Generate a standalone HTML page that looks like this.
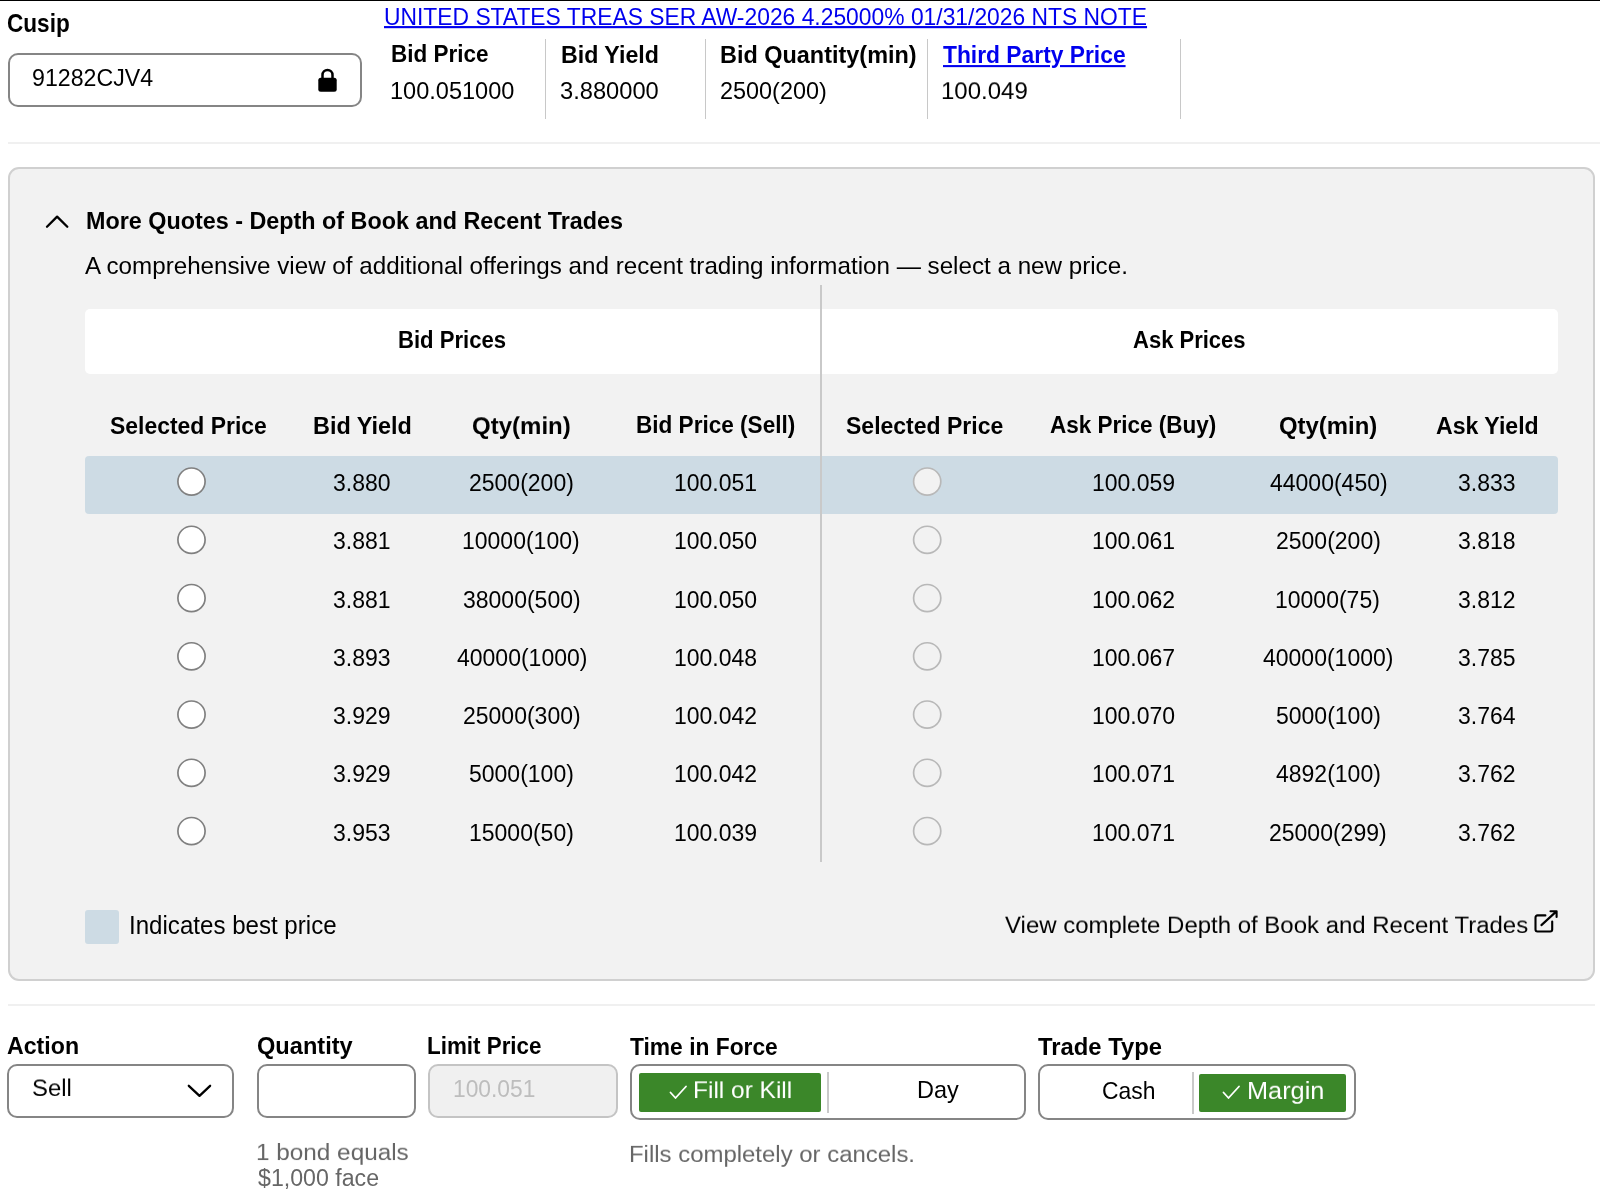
<!DOCTYPE html>
<html><head><meta charset="utf-8"><style>
html,body{margin:0;padding:0;background:#fff;width:1600px;height:1189px;overflow:hidden;position:relative;font-family:"Liberation Sans",sans-serif;}
.t{position:absolute;white-space:nowrap;will-change:transform;}
.b{position:absolute;box-sizing:border-box;}
</style></head><body>
<div class="b" style="left:0;top:0;width:1600px;height:1px;background:#000"></div>
<!-- cusip input -->
<div class="b" style="left:8px;top:53px;width:354px;height:54px;border:2px solid #858585;border-radius:10px;background:#fff"></div>
<svg class="b" style="left:318px;top:68px" width="19" height="24" viewBox="0 0 19 24">
  <path d="M4.5 10.5 V7 a5 5 0 0 1 10 0 V10.5" fill="none" stroke="#000" stroke-width="2.5"/>
  <rect x="0.3" y="9.8" width="18.4" height="14" rx="2.5" fill="#000"/>
</svg>
<!-- quote separators -->
<div class="b" style="left:545px;top:39px;width:1px;height:80px;background:#c8c8c8"></div>
<div class="b" style="left:705px;top:39px;width:1px;height:80px;background:#c8c8c8"></div>
<div class="b" style="left:927px;top:39px;width:1px;height:80px;background:#c8c8c8"></div>
<div class="b" style="left:1180px;top:39px;width:1px;height:80px;background:#c8c8c8"></div>
<!-- hr -->
<div class="b" style="left:8px;top:142px;width:1592px;height:2px;background:#f0f0f0"></div>
<!-- panel -->
<div class="b" style="left:8px;top:167px;width:1587px;height:814px;background:#f2f2f2;border:2px solid #d0d0d0;border-radius:11px"></div>
<svg class="b" style="left:44px;top:213px" width="27" height="18" viewBox="0 0 27 18">
  <path d="M3.0 13.8 L13.1 3.6 L23.3 13.8" fill="none" stroke="#000" stroke-width="2.3" stroke-linecap="round" stroke-linejoin="round"/>
</svg>
<div class="b" style="left:85px;top:308.6px;width:1473px;height:65.6px;background:#fff;border-radius:5px"></div>
<div class="b" style="left:85px;top:456px;width:1473px;height:57.5px;background:#cddbe4;border-radius:4px"></div>
<div class="b" style="left:820.3px;top:285px;width:1.5px;height:577px;background:#c9c9c9"></div>
<svg class="b" style="left:0;top:0" width="1600" height="1189" viewBox="0 0 1600 1189">
<circle cx="191.5" cy="481.60" r="13.6" fill="#fff" stroke="#808080" stroke-width="1.7"/>
<circle cx="927.2" cy="481.60" r="13.6" fill="#f2f2f2" stroke="#b8b8b8" stroke-width="1.7"/>
<circle cx="191.5" cy="539.85" r="13.6" fill="#fff" stroke="#808080" stroke-width="1.7"/>
<circle cx="927.2" cy="539.85" r="13.6" fill="#f2f2f2" stroke="#b8b8b8" stroke-width="1.7"/>
<circle cx="191.5" cy="598.10" r="13.6" fill="#fff" stroke="#808080" stroke-width="1.7"/>
<circle cx="927.2" cy="598.10" r="13.6" fill="#f2f2f2" stroke="#b8b8b8" stroke-width="1.7"/>
<circle cx="191.5" cy="656.35" r="13.6" fill="#fff" stroke="#808080" stroke-width="1.7"/>
<circle cx="927.2" cy="656.35" r="13.6" fill="#f2f2f2" stroke="#b8b8b8" stroke-width="1.7"/>
<circle cx="191.5" cy="714.60" r="13.6" fill="#fff" stroke="#808080" stroke-width="1.7"/>
<circle cx="927.2" cy="714.60" r="13.6" fill="#f2f2f2" stroke="#b8b8b8" stroke-width="1.7"/>
<circle cx="191.5" cy="772.85" r="13.6" fill="#fff" stroke="#808080" stroke-width="1.7"/>
<circle cx="927.2" cy="772.85" r="13.6" fill="#f2f2f2" stroke="#b8b8b8" stroke-width="1.7"/>
<circle cx="191.5" cy="831.10" r="13.6" fill="#fff" stroke="#808080" stroke-width="1.7"/>
<circle cx="927.2" cy="831.10" r="13.6" fill="#f2f2f2" stroke="#b8b8b8" stroke-width="1.7"/>
</svg>
<div class="b" style="left:85px;top:910px;width:34px;height:33.5px;background:#cddbe4;border-radius:3px"></div>
<svg class="b" style="left:1533px;top:908px" width="27" height="27" viewBox="0 0 27 27">
  <path d="M12.4 7.4 H4.5 a2 2 0 0 0 -2 2 V21.5 a2 2 0 0 0 2 2 H17.2 a2 2 0 0 0 2 -2 V13.5" fill="none" stroke="#000" stroke-width="2.1" stroke-linecap="round"/>
  <path d="M8.4 17.1 L23.4 3.4 M17.5 3.2 H23.6 V8.9" fill="none" stroke="#000" stroke-width="2.1" stroke-linecap="round" stroke-linejoin="round"/>
</svg>
<!-- hr2 -->
<div class="b" style="left:8px;top:1004px;width:1587px;height:2px;background:#f0f0f0"></div>
<!-- bottom controls -->
<div class="b" style="left:7px;top:1064px;width:227px;height:54px;border:2px solid #858585;border-radius:10px;background:#fff"></div>
<svg class="b" style="left:186px;top:1082px" width="28" height="18" viewBox="0 0 28 18">
  <path d="M2.8 3.8 L13.5 13.8 L24.1 3.8" fill="none" stroke="#000" stroke-width="2.3" stroke-linecap="round" stroke-linejoin="round"/>
</svg>
<div class="b" style="left:257px;top:1064px;width:159px;height:54px;border:2px solid #858585;border-radius:10px;background:#fff"></div>
<div class="b" style="left:428px;top:1064px;width:190px;height:54px;border:2px solid #c4c4c4;border-radius:10px;background:#f0f0f0"></div>
<div class="b" style="left:630px;top:1064px;width:396px;height:56px;border:2px solid #858585;border-radius:10px;background:#fff"></div>
<div class="b" style="left:639.2px;top:1073.2px;width:182.1px;height:38.8px;background:#3b8729;border-radius:2px"></div>
<div class="b" style="left:827.2px;top:1072px;width:1.5px;height:41px;background:#c9c9c9"></div>
<svg class="b" style="left:668px;top:1083px" width="22" height="18" viewBox="0 0 22 18">
  <path d="M2.5 9.5 L7.5 15 L18 3.5" fill="none" stroke="#fff" stroke-width="1.8" stroke-linecap="round" stroke-linejoin="round"/>
</svg>
<div class="b" style="left:1038px;top:1064px;width:318px;height:56px;border:2px solid #858585;border-radius:10px;background:#fff"></div>
<div class="b" style="left:1192px;top:1072px;width:1.5px;height:41.5px;background:#c9c9c9"></div>
<div class="b" style="left:1199.4px;top:1073.5px;width:146.8px;height:38.5px;background:#3b8729;border-radius:2px"></div>
<svg class="b" style="left:1221px;top:1083px" width="22" height="18" viewBox="0 0 22 18">
  <path d="M2.5 9.5 L7.5 15 L18 3.5" fill="none" stroke="#fff" stroke-width="1.8" stroke-linecap="round" stroke-linejoin="round"/>
</svg>

<div class="t" style="left:7.20px;top:14.09px;font-size:22.58px;line-height:22.58px;font-weight:bold;color:#000;transform:scaleY(1.126);transform-origin:0 19.11px;">Cusip</div>
<div class="t" style="left:384.00px;top:5.86px;font-size:22.85px;line-height:22.85px;font-weight:normal;color:#0000ee;transform:scaleY(1.075);transform-origin:0 19.34px;text-decoration:underline;text-underline-offset:1.4px;text-decoration-thickness:2px;">UNITED STATES TREAS SER AW-2026 4.25000% 01/31/2026 NTS NOTE</div>
<div class="t" style="left:32.07px;top:66.88px;font-size:23.18px;line-height:23.18px;font-weight:normal;color:#000;transform:scaleY(1.060);transform-origin:0 19.62px;">91282CJV4</div>
<div class="t" style="left:390.55px;top:44.45px;font-size:22.50px;line-height:22.50px;font-weight:bold;color:#000;transform:scaleY(1.066);transform-origin:0 19.05px;">Bid Price</div>
<div class="t" style="left:560.51px;top:43.86px;font-size:23.20px;line-height:23.20px;font-weight:bold;color:#000;transform:scaleY(1.034);transform-origin:0 19.64px;">Bid Yield</div>
<div class="t" style="left:719.79px;top:43.66px;font-size:23.44px;line-height:23.44px;font-weight:bold;color:#000;transform:scaleY(1.023);transform-origin:0 19.84px;">Bid Quantity(min)</div>
<div class="t" style="left:942.57px;top:44.18px;font-size:22.82px;line-height:22.82px;font-weight:bold;color:#0000ee;transform:scaleY(1.038);transform-origin:0 19.32px;text-decoration:underline;text-underline-offset:1.5px;text-decoration-thickness:1.6px;">Third Party Price</div>
<div class="t" style="left:390.25px;top:79.83px;font-size:23.54px;line-height:23.54px;font-weight:normal;color:#000;">100.051000</div>
<div class="t" style="left:560.29px;top:79.70px;font-size:23.68px;line-height:23.68px;font-weight:normal;color:#000;">3.880000</div>
<div class="t" style="left:720.03px;top:79.92px;font-size:23.43px;line-height:23.43px;font-weight:normal;color:#000;">2500(200)</div>
<div class="t" style="left:941.02px;top:79.43px;font-size:24.01px;line-height:24.01px;font-weight:normal;color:#000;transform:scaleY(0.984);transform-origin:0 20.32px;">100.049</div>
<div class="t" style="left:85.80px;top:209.74px;font-size:23.35px;line-height:23.35px;font-weight:bold;color:#000;transform:scaleY(1.058);transform-origin:0 19.76px;">More Quotes - Depth of Book and Recent Trades</div>
<div class="t" style="left:85.30px;top:254.31px;font-size:24.20px;line-height:24.20px;font-weight:normal;color:#000;">A comprehensive view of additional offerings and recent trading information — select a new price.</div>
<div class="t" style="left:398.27px;top:330.29px;font-size:22.11px;line-height:22.11px;font-weight:bold;color:#000;transform:scaleY(1.091);transform-origin:0 18.71px;">Bid Prices</div>
<div class="t" style="left:1133.16px;top:330.36px;font-size:22.02px;line-height:22.02px;font-weight:bold;color:#000;transform:scaleY(1.096);transform-origin:0 18.64px;">Ask Prices</div>
<div class="t" style="left:110.04px;top:414.98px;font-size:22.94px;line-height:22.94px;font-weight:bold;color:#000;transform:scaleY(1.033);transform-origin:0 19.42px;">Selected Price</div>
<div class="t" style="left:312.59px;top:414.57px;font-size:23.42px;line-height:23.42px;font-weight:bold;color:#000;transform:scaleY(1.012);transform-origin:0 19.83px;">Bid Yield</div>
<div class="t" style="left:472.29px;top:414.07px;font-size:24.02px;line-height:24.02px;font-weight:bold;color:#000;transform:scaleY(0.986);transform-origin:0 20.33px;">Qty(min)</div>
<div class="t" style="left:636.15px;top:415.29px;font-size:22.57px;line-height:22.57px;font-weight:bold;color:#000;transform:scaleY(1.049);transform-origin:0 19.11px;">Bid Price (Sell)</div>
<div class="t" style="left:845.79px;top:414.92px;font-size:23.01px;line-height:23.01px;font-weight:bold;color:#000;transform:scaleY(1.030);transform-origin:0 19.48px;">Selected Price</div>
<div class="t" style="left:1050.05px;top:415.34px;font-size:22.51px;line-height:22.51px;font-weight:bold;color:#000;transform:scaleY(1.052);transform-origin:0 19.06px;">Ask Price (Buy)</div>
<div class="t" style="left:1279.04px;top:414.17px;font-size:23.90px;line-height:23.90px;font-weight:bold;color:#000;">Qty(min)</div>
<div class="t" style="left:1435.79px;top:414.85px;font-size:23.10px;line-height:23.10px;font-weight:bold;color:#000;transform:scaleY(1.026);transform-origin:0 19.55px;">Ask Yield</div>
<div class="t" style="left:333.29px;top:472.03px;font-size:23.00px;line-height:23.00px;font-weight:normal;color:#000;transform:scaleY(1.059);transform-origin:0 19.47px;">3.880</div>
<div class="t" style="left:469.11px;top:472.03px;font-size:23.00px;line-height:23.00px;font-weight:normal;color:#000;transform:scaleY(1.059);transform-origin:0 19.47px;">2500(200)</div>
<div class="t" style="left:673.66px;top:472.03px;font-size:23.00px;line-height:23.00px;font-weight:normal;color:#000;transform:scaleY(1.059);transform-origin:0 19.47px;">100.051</div>
<div class="t" style="left:1091.66px;top:472.03px;font-size:23.00px;line-height:23.00px;font-weight:normal;color:#000;transform:scaleY(1.059);transform-origin:0 19.47px;">100.059</div>
<div class="t" style="left:1269.55px;top:472.03px;font-size:23.00px;line-height:23.00px;font-weight:normal;color:#000;transform:scaleY(1.059);transform-origin:0 19.47px;">44000(450)</div>
<div class="t" style="left:1458.29px;top:472.03px;font-size:23.00px;line-height:23.00px;font-weight:normal;color:#000;transform:scaleY(1.059);transform-origin:0 19.47px;">3.833</div>
<div class="t" style="left:333.41px;top:530.28px;font-size:23.00px;line-height:23.00px;font-weight:normal;color:#000;transform:scaleY(1.059);transform-origin:0 19.47px;">3.881</div>
<div class="t" style="left:462.48px;top:530.28px;font-size:23.00px;line-height:23.00px;font-weight:normal;color:#000;transform:scaleY(1.059);transform-origin:0 19.47px;">10000(100)</div>
<div class="t" style="left:673.54px;top:530.28px;font-size:23.00px;line-height:23.00px;font-weight:normal;color:#000;transform:scaleY(1.059);transform-origin:0 19.47px;">100.050</div>
<div class="t" style="left:1091.66px;top:530.28px;font-size:23.00px;line-height:23.00px;font-weight:normal;color:#000;transform:scaleY(1.059);transform-origin:0 19.47px;">100.061</div>
<div class="t" style="left:1275.61px;top:530.28px;font-size:23.00px;line-height:23.00px;font-weight:normal;color:#000;transform:scaleY(1.059);transform-origin:0 19.47px;">2500(200)</div>
<div class="t" style="left:1458.29px;top:530.28px;font-size:23.00px;line-height:23.00px;font-weight:normal;color:#000;transform:scaleY(1.059);transform-origin:0 19.47px;">3.818</div>
<div class="t" style="left:333.41px;top:588.53px;font-size:23.00px;line-height:23.00px;font-weight:normal;color:#000;transform:scaleY(1.059);transform-origin:0 19.47px;">3.881</div>
<div class="t" style="left:462.94px;top:588.53px;font-size:23.00px;line-height:23.00px;font-weight:normal;color:#000;transform:scaleY(1.059);transform-origin:0 19.47px;">38000(500)</div>
<div class="t" style="left:673.54px;top:588.53px;font-size:23.00px;line-height:23.00px;font-weight:normal;color:#000;transform:scaleY(1.059);transform-origin:0 19.47px;">100.050</div>
<div class="t" style="left:1091.66px;top:588.53px;font-size:23.00px;line-height:23.00px;font-weight:normal;color:#000;transform:scaleY(1.059);transform-origin:0 19.47px;">100.062</div>
<div class="t" style="left:1275.38px;top:588.53px;font-size:23.00px;line-height:23.00px;font-weight:normal;color:#000;transform:scaleY(1.059);transform-origin:0 19.47px;">10000(75)</div>
<div class="t" style="left:1458.41px;top:588.53px;font-size:23.00px;line-height:23.00px;font-weight:normal;color:#000;transform:scaleY(1.059);transform-origin:0 19.47px;">3.812</div>
<div class="t" style="left:333.29px;top:646.78px;font-size:23.00px;line-height:23.00px;font-weight:normal;color:#000;transform:scaleY(1.059);transform-origin:0 19.47px;">3.893</div>
<div class="t" style="left:456.66px;top:646.78px;font-size:23.00px;line-height:23.00px;font-weight:normal;color:#000;transform:scaleY(1.059);transform-origin:0 19.47px;">40000(1000)</div>
<div class="t" style="left:673.54px;top:646.78px;font-size:23.00px;line-height:23.00px;font-weight:normal;color:#000;transform:scaleY(1.059);transform-origin:0 19.47px;">100.048</div>
<div class="t" style="left:1091.66px;top:646.78px;font-size:23.00px;line-height:23.00px;font-weight:normal;color:#000;transform:scaleY(1.059);transform-origin:0 19.47px;">100.067</div>
<div class="t" style="left:1263.16px;top:646.78px;font-size:23.00px;line-height:23.00px;font-weight:normal;color:#000;transform:scaleY(1.059);transform-origin:0 19.47px;">40000(1000)</div>
<div class="t" style="left:1458.29px;top:646.78px;font-size:23.00px;line-height:23.00px;font-weight:normal;color:#000;transform:scaleY(1.059);transform-origin:0 19.47px;">3.785</div>
<div class="t" style="left:333.41px;top:705.03px;font-size:23.00px;line-height:23.00px;font-weight:normal;color:#000;transform:scaleY(1.059);transform-origin:0 19.47px;">3.929</div>
<div class="t" style="left:462.71px;top:705.03px;font-size:23.00px;line-height:23.00px;font-weight:normal;color:#000;transform:scaleY(1.059);transform-origin:0 19.47px;">25000(300)</div>
<div class="t" style="left:673.66px;top:705.03px;font-size:23.00px;line-height:23.00px;font-weight:normal;color:#000;transform:scaleY(1.059);transform-origin:0 19.47px;">100.042</div>
<div class="t" style="left:1091.54px;top:705.03px;font-size:23.00px;line-height:23.00px;font-weight:normal;color:#000;transform:scaleY(1.059);transform-origin:0 19.47px;">100.070</div>
<div class="t" style="left:1275.72px;top:705.03px;font-size:23.00px;line-height:23.00px;font-weight:normal;color:#000;transform:scaleY(1.059);transform-origin:0 19.47px;">5000(100)</div>
<div class="t" style="left:1458.18px;top:705.03px;font-size:23.00px;line-height:23.00px;font-weight:normal;color:#000;transform:scaleY(1.059);transform-origin:0 19.47px;">3.764</div>
<div class="t" style="left:333.41px;top:763.28px;font-size:23.00px;line-height:23.00px;font-weight:normal;color:#000;transform:scaleY(1.059);transform-origin:0 19.47px;">3.929</div>
<div class="t" style="left:469.22px;top:763.28px;font-size:23.00px;line-height:23.00px;font-weight:normal;color:#000;transform:scaleY(1.059);transform-origin:0 19.47px;">5000(100)</div>
<div class="t" style="left:673.66px;top:763.28px;font-size:23.00px;line-height:23.00px;font-weight:normal;color:#000;transform:scaleY(1.059);transform-origin:0 19.47px;">100.042</div>
<div class="t" style="left:1091.66px;top:763.28px;font-size:23.00px;line-height:23.00px;font-weight:normal;color:#000;transform:scaleY(1.059);transform-origin:0 19.47px;">100.071</div>
<div class="t" style="left:1275.95px;top:763.28px;font-size:23.00px;line-height:23.00px;font-weight:normal;color:#000;transform:scaleY(1.059);transform-origin:0 19.47px;">4892(100)</div>
<div class="t" style="left:1458.41px;top:763.28px;font-size:23.00px;line-height:23.00px;font-weight:normal;color:#000;transform:scaleY(1.059);transform-origin:0 19.47px;">3.762</div>
<div class="t" style="left:333.29px;top:821.53px;font-size:23.00px;line-height:23.00px;font-weight:normal;color:#000;transform:scaleY(1.059);transform-origin:0 19.47px;">3.953</div>
<div class="t" style="left:468.88px;top:821.53px;font-size:23.00px;line-height:23.00px;font-weight:normal;color:#000;transform:scaleY(1.059);transform-origin:0 19.47px;">15000(50)</div>
<div class="t" style="left:673.66px;top:821.53px;font-size:23.00px;line-height:23.00px;font-weight:normal;color:#000;transform:scaleY(1.059);transform-origin:0 19.47px;">100.039</div>
<div class="t" style="left:1091.66px;top:821.53px;font-size:23.00px;line-height:23.00px;font-weight:normal;color:#000;transform:scaleY(1.059);transform-origin:0 19.47px;">100.071</div>
<div class="t" style="left:1269.21px;top:821.53px;font-size:23.00px;line-height:23.00px;font-weight:normal;color:#000;transform:scaleY(1.059);transform-origin:0 19.47px;">25000(299)</div>
<div class="t" style="left:1458.41px;top:821.53px;font-size:23.00px;line-height:23.00px;font-weight:normal;color:#000;transform:scaleY(1.059);transform-origin:0 19.47px;">3.762</div>
<div class="t" style="left:129.03px;top:913.70px;font-size:24.10px;line-height:24.10px;font-weight:normal;color:#000;transform:scaleY(1.031);transform-origin:0 20.40px;">Indicates best price</div>
<div class="t" style="left:1005.00px;top:913.21px;font-size:23.97px;line-height:23.97px;font-weight:normal;color:#000;transform:scaleY(0.964);transform-origin:0 20.29px;">View complete Depth of Book and Recent Trades</div>
<div class="t" style="left:7.34px;top:1035.39px;font-size:23.17px;line-height:23.17px;font-weight:bold;color:#000;transform:scaleY(1.041);transform-origin:0 19.61px;">Action</div>
<div class="t" style="left:257.06px;top:1035.01px;font-size:23.61px;line-height:23.61px;font-weight:bold;color:#000;transform:scaleY(1.022);transform-origin:0 19.99px;">Quantity</div>
<div class="t" style="left:427.26px;top:1036.04px;font-size:22.40px;line-height:22.40px;font-weight:bold;color:#000;transform:scaleY(1.077);transform-origin:0 18.96px;">Limit Price</div>
<div class="t" style="left:630.27px;top:1035.70px;font-size:22.80px;line-height:22.80px;font-weight:bold;color:#000;transform:scaleY(1.058);transform-origin:0 19.30px;">Time in Force</div>
<div class="t" style="left:1038.26px;top:1034.83px;font-size:23.83px;line-height:23.83px;font-weight:bold;color:#000;transform:scaleY(1.012);transform-origin:0 20.17px;">Trade Type</div>
<div class="t" style="left:32.34px;top:1076.07px;font-size:23.89px;line-height:23.89px;font-weight:normal;color:#000;transform:scaleY(0.973);transform-origin:0 20.23px;">Sell</div>
<div class="t" style="left:452.60px;top:1077.99px;font-size:22.81px;line-height:22.81px;font-weight:normal;color:#bdbdbd;transform:scaleY(1.058);transform-origin:0 19.31px;">100.051</div>
<div class="t" style="left:692.84px;top:1078.48px;font-size:24.48px;line-height:24.48px;font-weight:normal;color:#fff;transform:scaleY(0.980);transform-origin:0 20.72px;">Fill or Kill</div>
<div class="t" style="left:916.82px;top:1079.31px;font-size:23.49px;line-height:23.49px;font-weight:normal;color:#000;transform:scaleY(1.021);transform-origin:0 19.89px;">Day</div>
<div class="t" style="left:1102.16px;top:1079.83px;font-size:22.89px;line-height:22.89px;font-weight:normal;color:#000;transform:scaleY(1.048);transform-origin:0 19.37px;">Cash</div>
<div class="t" style="left:1246.88px;top:1077.78px;font-size:25.30px;line-height:25.30px;font-weight:normal;color:#fff;transform:scaleY(0.950);transform-origin:0 21.42px;">Margin</div>
<div class="t" style="left:256.30px;top:1140.11px;font-size:24.32px;line-height:24.32px;font-weight:normal;color:#666;transform:scaleY(0.950);transform-origin:0 20.59px;">1 bond equals</div>
<div class="t" style="left:257.77px;top:1167.09px;font-size:23.16px;line-height:23.16px;font-weight:normal;color:#666;">$1,000 face</div>
<div class="t" style="left:628.58px;top:1141.93px;font-size:23.95px;line-height:23.95px;font-weight:normal;color:#666;transform:scaleY(0.953);transform-origin:0 20.27px;">Fills completely or cancels.</div>
</body></html>
